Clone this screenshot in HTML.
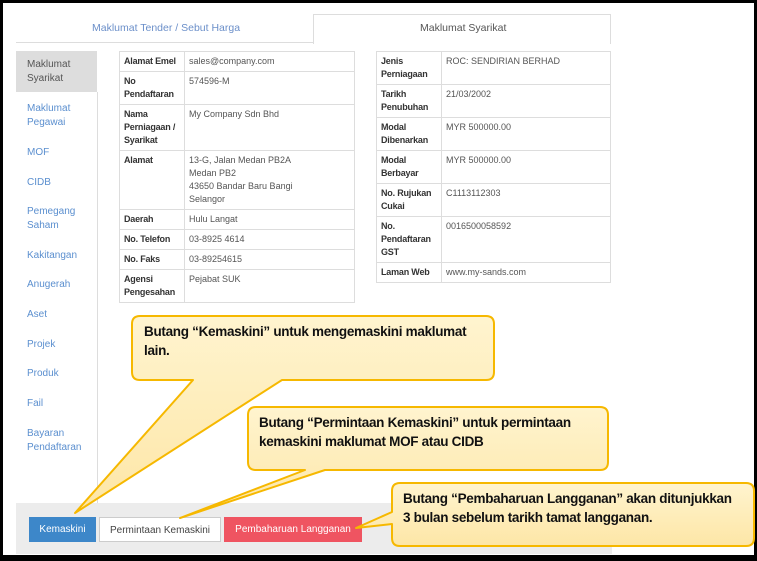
<!DOCTYPE html>
<html><head><meta charset="utf-8"><style>
*{margin:0;padding:0;box-sizing:border-box}
body{width:757px;height:561px;background:#000;position:relative;overflow:hidden;font-family:"Liberation Sans",sans-serif;font-size:9px;color:#555}
#pg{position:absolute;left:3px;top:3px;width:751px;height:552px;background:#fff}
.a{position:absolute}
table{position:absolute;border-collapse:collapse;font-size:9px;table-layout:fixed}
td{border:1px solid #ddd;vertical-align:top;padding:3px 4px;line-height:13px;white-space:nowrap;overflow:hidden}
td.l{font-weight:bold;color:#333;letter-spacing:-0.2px}
.nav{position:absolute;left:27px;color:#5b8fcf;font-size:10px;line-height:14px}
.btn{position:absolute;top:517px;height:25px;font-size:10px;line-height:25px;text-align:center}
.ct{position:absolute;font-family:"Liberation Sans",sans-serif;font-weight:bold;font-size:13.5px;color:#111;line-height:19px;letter-spacing:-0.3px;white-space:nowrap}
</style></head><body>
<div id="pg"></div>
<div class="a" style="left:16px;top:42px;width:297px;height:1px;background:#ddd"></div>
<div class="a" style="left:92px;top:22px;color:#6b8fc9;font-size:10.5px">Maklumat Tender / Sebut Harga</div>
<div class="a" style="left:313px;top:14px;width:298px;height:30px;border:1px solid #ddd;border-bottom:none;background:#fff"></div>
<div class="a" style="left:420px;top:22px;color:#555;font-size:10.5px">Maklumat Syarikat</div>
<div class="a" style="left:16px;top:51px;width:81px;height:41px;background:#ddd"></div>
<div class="a" style="left:97px;top:92px;width:1px;height:411px;background:#ddd"></div>
<div class="nav" style="top:58px;color:#555">Maklumat<br>Syarikat</div>
<div class="nav" style="top:102px">Maklumat<br>Pegawai</div>
<div class="nav" style="top:146px">MOF</div>
<div class="nav" style="top:176px">CIDB</div>
<div class="nav" style="top:205px">Pemegang<br>Saham</div>
<div class="nav" style="top:249px">Kakitangan</div>
<div class="nav" style="top:278px">Anugerah</div>
<div class="nav" style="top:308px">Aset</div>
<div class="nav" style="top:338px">Projek</div>
<div class="nav" style="top:367px">Produk</div>
<div class="nav" style="top:397px">Fail</div>
<div class="nav" style="top:427px">Bayaran<br>Pendaftaran</div>
<table style="left:119px;top:51px;width:236px">
<colgroup><col style="width:65px"><col></colgroup>
<tr><td class="l">Alamat Emel</td><td>sales@company.com</td></tr>
<tr><td class="l">No<br>Pendaftaran</td><td>574596-M</td></tr>
<tr><td class="l">Nama<br>Perniagaan /<br>Syarikat</td><td>My Company Sdn Bhd</td></tr>
<tr><td class="l">Alamat</td><td>13-G, Jalan Medan PB2A<br>Medan PB2<br>43650 Bandar Baru Bangi<br>Selangor</td></tr>
<tr><td class="l">Daerah</td><td>Hulu Langat</td></tr>
<tr><td class="l">No. Telefon</td><td>03-8925 4614</td></tr>
<tr><td class="l">No. Faks</td><td>03-89254615</td></tr>
<tr><td class="l">Agensi<br>Pengesahan</td><td>Pejabat SUK</td></tr>
</table>
<table style="left:376px;top:51px;width:235px">
<colgroup><col style="width:65px"><col></colgroup>
<tr><td class="l">Jenis<br>Perniagaan</td><td>ROC: SENDIRIAN BERHAD</td></tr>
<tr><td class="l">Tarikh<br>Penubuhan</td><td>21/03/2002</td></tr>
<tr><td class="l">Modal<br>Dibenarkan</td><td>MYR 500000.00</td></tr>
<tr><td class="l">Modal<br>Berbayar</td><td>MYR 500000.00</td></tr>
<tr><td class="l">No. Rujukan<br>Cukai</td><td>C1113112303</td></tr>
<tr><td class="l">No.<br>Pendaftaran<br>GST</td><td>0016500058592</td></tr>
<tr><td class="l">Laman Web</td><td>www.my-sands.com</td></tr>
</table>
<div class="a" style="left:16px;top:503px;width:596px;height:51px;background:#ececec"></div>
<div class="btn" style="left:29px;width:67px;background:#3d87c9;color:#fff">Kemaskini</div>
<div class="btn" style="left:99px;width:122px;background:#fff;border:1px solid #ccc;color:#444">Permintaan Kemaskini</div>
<div class="btn" style="left:224px;width:138px;background:#ef5461;color:#fff">Pembaharuan Langganan</div>
<svg class="a" style="left:0;top:0" width="757" height="561">
<defs><linearGradient id="g" x1="0" y1="0" x2="0" y2="1"><stop offset="0" stop-color="#fff4cf"/><stop offset="1" stop-color="#fde6a6"/></linearGradient></defs>
<g fill="url(#g)" stroke="#f6b800" stroke-width="2" stroke-linejoin="round">
<path d="M140 316 H486 Q494 316 494 324 V372 Q494 380 486 380 H282 L75 513 L193 380 H140 Q132 380 132 372 V324 Q132 316 140 316 Z"/>
<path d="M256 407 H600 Q608 407 608 415 V462 Q608 470 600 470 H325 L180 518 L305 470 H256 Q248 470 248 462 V415 Q248 407 256 407 Z"/>
<path d="M400 483 H746 Q754 483 754 491 V538 Q754 546 746 546 H400 Q392 546 392 538 V524 L356 528 L392 512 V491 Q392 483 400 483 Z"/>
</g></svg>
<div class="ct" style="left:144px;top:322px">Butang “Kemaskini” untuk mengemaskini maklumat<br>lain.</div>
<div class="ct" style="left:259px;top:413px">Butang “Permintaan Kemaskini” untuk permintaan<br>kemaskini maklumat MOF atau CIDB</div>
<div class="ct" style="left:403px;top:489px">Butang “Pembaharuan Langganan” akan ditunjukkan<br>3 bulan sebelum tarikh tamat langganan.</div>
</body></html>
